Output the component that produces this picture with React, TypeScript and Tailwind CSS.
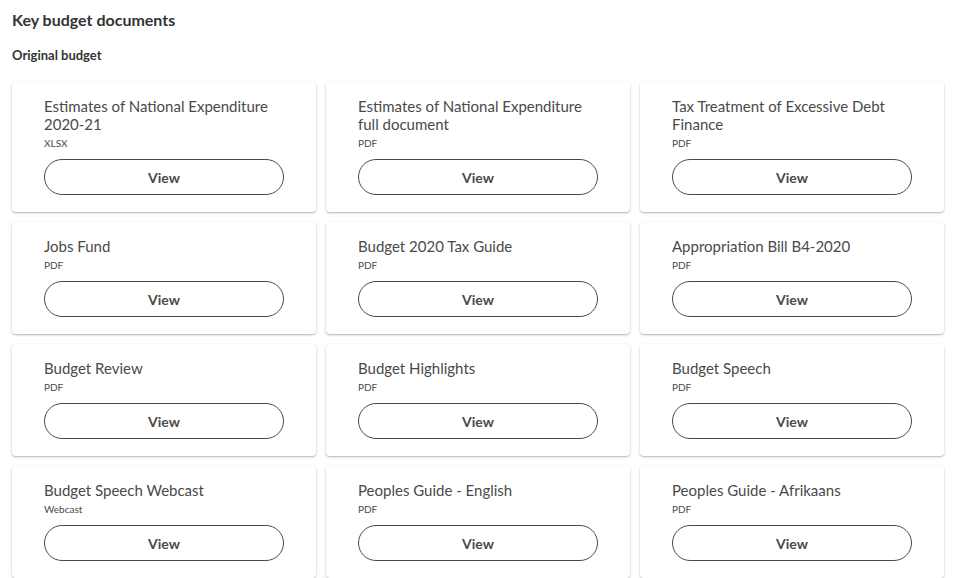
import React, { FC } from "react";

interface Doc {
  title: string;
  type: string;
}

const docs: Doc[] = [
  { title: "Estimates of National Expenditure 2020-21", type: "XLSX" },
  { title: "Estimates of National Expenditure full document", type: "PDF" },
  { title: "Tax Treatment of Excessive Debt Finance", type: "PDF" },
  { title: "Jobs Fund", type: "PDF" },
  { title: "Budget 2020 Tax Guide", type: "PDF" },
  { title: "Appropriation Bill B4-2020", type: "PDF" },
  { title: "Budget Review", type: "PDF" },
  { title: "Budget Highlights", type: "PDF" },
  { title: "Budget Speech", type: "PDF" },
  { title: "Budget Speech Webcast", type: "Webcast" },
  { title: "Peoples Guide - English", type: "PDF" },
  { title: "Peoples Guide - Afrikaans", type: "PDF" },
];

const DocCard: FC<Doc> = ({ title, type }) => (
  <div className="bg-white rounded-[4px] shadow-[0_1px_3px_rgba(0,0,0,0.2),0_1px_1px_rgba(0,0,0,0.12)] pl-8 pr-8 pt-[15px] pb-[17px] flex flex-col">
    <div className="text-[15px] leading-[18px] text-[#4a4a4a] pr-2">{title}</div>
    <div className="mt-[2px] text-[10px] leading-[16px] text-[#4a4a4a]">{type}</div>
    <button className="mt-[8px] h-9 w-full rounded-full border border-[#4a4a4a] bg-white text-[14px] font-bold text-[#4a4a4a]">
      View
    </button>
  </div>
);

const App: FC = () => {
  return (
    <div className="min-h-screen bg-white px-3 pt-[9px] font-['Lato',sans-serif] text-[#333]">
      <h1 className="text-[16px] leading-[22px] font-bold">Key budget documents</h1>
      <h2 className="mt-[16px] text-[13px] leading-[16px] font-bold">Original budget</h2>
      <div className="mt-[19px] grid grid-cols-3 gap-x-[10px] gap-y-[10px] items-start">
        {docs.map((d, i) => (
          <DocCard key={i} {...d} />
        ))}
      </div>
    </div>
  );
};

export default App;
